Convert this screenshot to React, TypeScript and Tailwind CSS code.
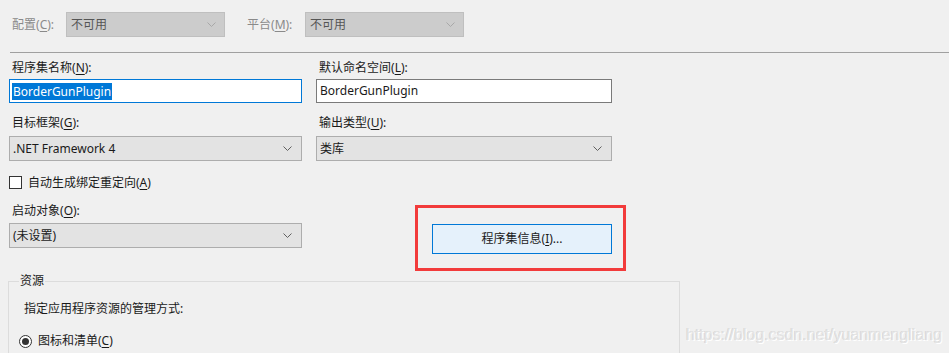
const font = { fontFamily: "'Noto Sans', 'Noto Sans CJK SC', sans-serif" };

function Chevron({ color = '#606060' }: { color?: string }) {
  return (
    <svg width="9" height="5" viewBox="0 0 9 5" className="shrink-0">
      <path d="M0.5 0.5 L4.5 4.5 L8.5 0.5" fill="none" stroke={color} strokeWidth="1" />
    </svg>
  );
}

function Combo({ value, w, disabled }: { value: string; w: string; disabled?: boolean }) {
  return (
    <div
      className={
        disabled
          ? `${w} h-[25px] flex items-center justify-between pl-[4px] pr-[8px] bg-[#cccccc] border border-[#bfbfbf] text-[#555]`
          : `${w} h-[25px] flex items-center justify-between pl-[3px] pr-[9px] bg-[#e3e3e3] border border-[#adadad] text-[#1a1a1a]`
      }
    >
      <span>{value}</span>
      <Chevron color={disabled ? '#a8a8a8' : '#606060'} />
    </div>
  );
}

function Label({ text, k, suffix = '):' }: { text: string; k: string; suffix?: string }) {
  return (
    <span>
      {text}(<span className="underline underline-offset-2">{k}</span>{suffix}
    </span>
  );
}

export default function App() {
  return (
    <div className="relative w-[949px] h-[353px] overflow-hidden bg-[#f0f0f0] text-[12px] text-[#1a1a1a]" style={font}>
      {/* top bar */}
      <div className="flex items-center pt-[12px] h-[37px]">
        <div className="pl-[12px] w-[66px] text-[#8a8a8a]">
          <Label text="配置" k="C" />
        </div>
        <Combo value="不可用" w="w-[159px]" disabled />
        <div className="ml-[22px] w-[58px] text-[#8a8a8a]">
          <Label text="平台" k="M" />
        </div>
        <Combo value="不可用" w="w-[159px]" disabled />
      </div>
      <div className="mt-[15px] ml-[10px] border-t border-[#a0a0a0]" />

      {/* main form */}
      <div className="flex pl-[9px] pt-[6px]">
        <div className="w-[293px]">
          <div className="h-[18px] pl-[3px] flex items-center">
            <Label text="程序集名称" k="N" />
          </div>
          <div className="mt-[2px] h-[24px] flex items-center px-[2px] bg-white border border-[#0078d7]">
            <span className="bg-[#0078d7] text-white leading-[17px] px-[1px]">BorderGunPlugin</span>
          </div>
          <div className="mt-[11px] h-[18px] pl-[3px] flex items-center">
            <Label text="目标框架" k="G" />
          </div>
          <div className="mt-[4px]">
            <Combo value=".NET Framework 4" w="w-[293px]" />
          </div>
        </div>
        <div className="ml-[14px] w-[296px]">
          <div className="h-[18px] pl-[3px] flex items-center">
            <Label text="默认命名空间" k="L" />
          </div>
          <div className="mt-[2px] h-[24px] flex items-center pl-[3px] bg-white border border-[#7a7a7a]">
            BorderGunPlugin
          </div>
          <div className="mt-[11px] h-[18px] pl-[3px] flex items-center">
            <Label text="输出类型" k="U" />
          </div>
          <div className="mt-[4px]">
            <Combo value="类库" w="w-[296px]" />
          </div>
        </div>
      </div>

      <div className="flex items-center pl-[9px] mt-[15px] h-[13px]">
        <div className="w-[13px] h-[13px] border border-[#333] bg-white" />
        <span className="ml-[6px]">
          自动生成绑定重定向(<span className="underline underline-offset-2">A</span>)
        </span>
      </div>

      <div className="flex items-start pl-[9px]">
        <div className="w-[293px] pt-[13px]">
          <div className="h-[18px] pl-[3px] flex items-center">
            <Label text="启动对象" k="O" />
          </div>
          <div className="mt-[3px]">
            <Combo value="(未设置)" w="w-[293px]" />
          </div>
        </div>
        <div className="ml-[113px] mt-[16px] w-[211px] h-[66px] border-[3px] border-[#f23b3b] pl-[14px] pt-[16px]">
          <div className="w-[180px] h-[30px] flex items-center justify-center bg-[#e5f1fb] border border-[#0078d7]">
            程序集信息(<span className="underline underline-offset-2">I</span>)...
          </div>
        </div>
      </div>

      <fieldset className="ml-[8px] mt-[2px] w-[672px] h-[100px] border border-[#dcdcdc] px-[10px]">
        <legend className="px-[1px] leading-[16px]">资源</legend>
        <div className="pl-[5px] mt-[11px] h-[18px] flex items-center">指定应用程序资源的管理方式:</div>
        <div className="flex items-center mt-[14px]">
          <div className="w-[13px] h-[13px] rounded-full border border-[#333] bg-white flex items-center justify-center">
            <div className="w-[7px] h-[7px] rounded-full bg-[#333]" />
          </div>
          <span className="ml-[6px]">
            图标和清单(<span className="underline underline-offset-2">C</span>)
          </span>
        </div>
      </fieldset>

      <div
        className="absolute left-[686px] top-[323px] text-[16px] text-[#e4e4e4]"
        style={{ fontFamily: "'Liberation Sans', Arial, sans-serif", textShadow: '1px 1px 0 #ffffff, -0.5px -0.5px 0 #cfcfcf' }}
      >
        https://blog.csdn.net/yuanmengliang
      </div>
    </div>
  );
}
